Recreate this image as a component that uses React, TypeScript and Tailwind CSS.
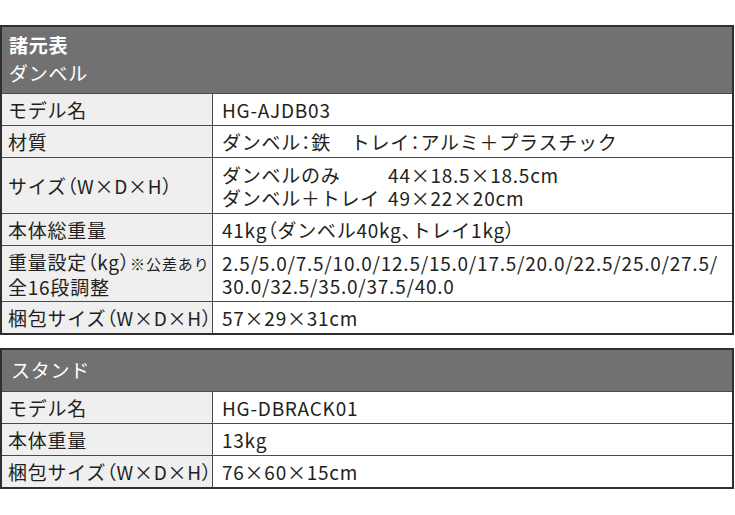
import React from "react";

const font = { fontFamily: '"Noto Sans CJK JP", "Noto Sans", sans-serif' };

const T = (s: string) =>
  s.split(/([（）：、])/).map((p, i) =>
    /^[（）：、]$/.test(p) ? (
      <span key={i} className="[font-feature-settings:'palt']">
        {p}
      </span>
    ) : (
      <React.Fragment key={i}>{p}</React.Fragment>
    )
  );

type Row = { label: React.ReactNode; value: React.ReactNode; tall?: boolean };

function Table({ header, rows, headerH }: { header: React.ReactNode; rows: Row[]; headerH: string }) {
  return (
    <div className="w-[734px] border-2 border-[#2f2f2f] text-[19px] tracking-[0.04em] text-[#231f20]">
      <div className={`${headerH} bg-[#727171] text-white px-[7px]`}>{header}</div>
      {rows.map((r, i) => (
        <div key={i} className={`flex border-t border-[#4a4a4a] ${r.tall ? "h-[56px]" : "h-[32px]"}`}>
          <div className="w-[211px] shrink-0 bg-[#efefef] border-r border-[#4a4a4a] pl-[6px] flex items-center leading-[23px] whitespace-nowrap">
            <div>{r.label}</div>
          </div>
          <div className="flex-1 bg-white pl-[9px] flex items-center leading-[23px] whitespace-nowrap">
            <div>{r.value}</div>
          </div>
        </div>
      ))}
    </div>
  );
}

export default function App() {
  const rows1: Row[] = [
    { label: "モデル名", value: "HG-AJDB03" },
    { label: "材質", value: T("ダンベル：鉄　トレイ：アルミ＋プラスチック") },
    {
      label: T("サイズ（W×D×H）"),
      tall: true,
      value: (
        <div className="grid grid-cols-[auto_auto] justify-start gap-x-[8px]">
          <span>ダンベルのみ</span>
          <span>44×18.5×18.5cm</span>
          <span>ダンベル＋トレイ</span>
          <span>49×22×20cm</span>
        </div>
      ),
    },
    { label: "本体総重量", value: T("41kg（ダンベル40kg、トレイ1kg）") },
    {
      label: (
        <>
          <div>
            {T("重量設定（kg）")}
            <span className="text-[15px] tracking-[0.06em]">※公差あり</span>
          </div>
          <div>全16段調整</div>
        </>
      ),
      tall: true,
      value: (
        <>
          <div>2.5/5.0/7.5/10.0/12.5/15.0/17.5/20.0/22.5/25.0/27.5/</div>
          <div>30.0/32.5/35.0/37.5/40.0</div>
        </>
      ),
    },
    { label: T("梱包サイズ（W×D×H）"), value: "57×29×31cm" },
  ];
  const rows2: Row[] = [
    { label: "モデル名", value: "HG-DBRACK01" },
    { label: "本体重量", value: "13kg" },
    { label: T("梱包サイズ（W×D×H）"), value: "76×60×15cm" },
  ];
  return (
    <div className="w-[735px] h-[515px] bg-white pt-[25px]" style={font}>
      <Table
        headerH="h-[66px]"
        header={
          <div className="flex flex-col pt-[4px] leading-[28px]">
            <span className="font-bold">諸元表</span>
            <span>ダンベル</span>
          </div>
        }
        rows={rows1}
      />
      <div className="mt-[13px]">
        <Table
          headerH="h-[41px] flex items-center pl-[9px]"
          header={<span>スタンド</span>}
          rows={rows2}
        />
      </div>
    </div>
  );
}
